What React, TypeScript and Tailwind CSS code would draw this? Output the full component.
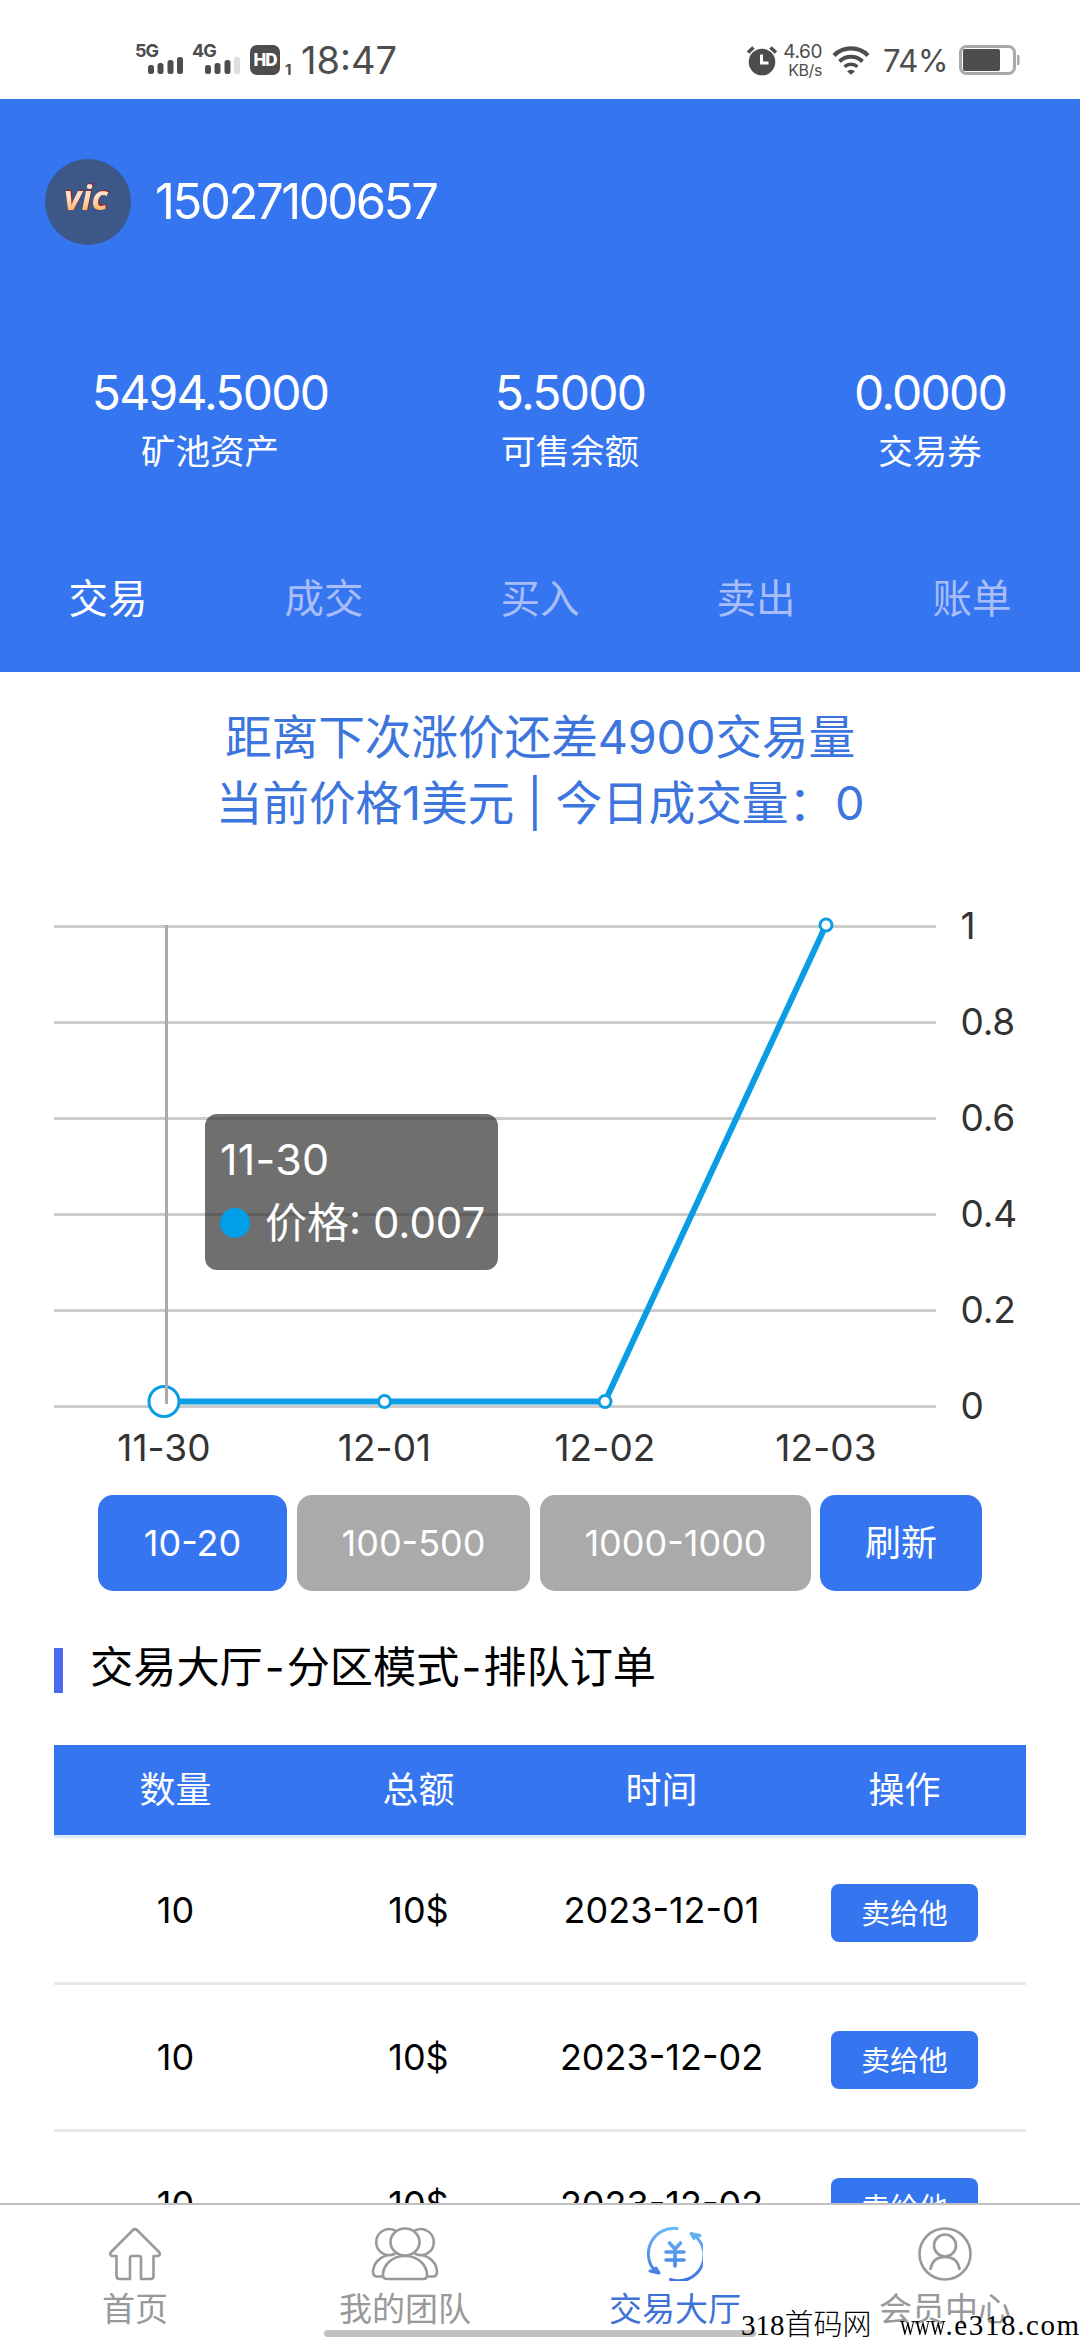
import type { ReactNode } from "react";

const stats = [
  { value: "5494.5000", label: "矿池资产" },
  { value: "5.5000", label: "可售余额" },
  { value: "0.0000", label: "交易券" },
];

const tabs = ["交易", "成交", "买入", "卖出", "账单"];

const orders = [
  { amount: "10", total: "10$", date: "2023-12-01" },
  { amount: "10", total: "10$", date: "2023-12-02" },
  { amount: "10", total: "10$", date: "2023-12-02" },
];

const gridLines = [
  { label: "1", y: 36.5 },
  { label: "0.8", y: 132.5 },
  { label: "0.6", y: 228.5 },
  { label: "0.4", y: 324.5 },
  { label: "0.2", y: 420.5 },
  { label: "0", y: 516.5 },
];

const points = [
  { label: "11-30", x: 164, y: 511.5 },
  { label: "12-01", x: 384.5, y: 511.5 },
  { label: "12-02", x: 605, y: 511.5 },
  { label: "12-03", x: 826, y: 35 },
];

function Signal({ label, weak }: { label: string; weak?: boolean }) {
  return (
    <div className="relative h-8 w-[46px]">
      <span className="absolute left-[-1px] top-0 text-[18px] font-bold leading-[15px] tracking-[-1px]">
        {label}
      </span>
      <svg className="absolute left-3 top-[14px]" width="36" height="18">
        <rect x="0" y="8" width="6" height="9" rx="2.5" fill="#4d4d4d" />
        <rect x="9.5" y="6" width="6" height="11" rx="2.5" fill="#4d4d4d" />
        <rect x="19.5" y="3" width="6" height="14" rx="2.5" fill="#4d4d4d" />
        <rect x="29" y="0" width="6" height="17" rx="2.5" fill={weak ? "#dedede" : "#4d4d4d"} />
      </svg>
    </div>
  );
}

function StatusBar() {
  return (
    <div className="flex h-[99px] items-start pl-[136px] pt-[43px] text-[#4d4d4d]">
      <Signal label="5G" />
      <div className="ml-[11px]">
        <Signal label="4G" weak />
      </div>
      <div className="ml-[11px] mt-[2px] flex size-[30px] items-center justify-center rounded-[7px] bg-[#4d4d4d] text-[17px] font-extrabold leading-none tracking-[-1px] text-white">
        HD
      </div>
      <span className="ml-[5px] mt-[19px] w-[8px] text-[15px] font-bold leading-[15px]">1</span>
      <span className="ml-[8px] w-[99px] text-[38px] leading-[34px]">18:47</span>

      <svg className="ml-[346px] mt-[2px]" width="32" height="32" viewBox="0 0 32 32">
        <circle cx="16" cy="17" r="13.3" fill="#4d4d4d" />
        <path d="M2 7.5 7.5 2.5M24.5 2.5 30 7.5" stroke="#4d4d4d" strokeWidth="3.6" fill="none" />
        <path d="M15.5 9.5v8.5h7" stroke="#fff" strokeWidth="3" fill="none" />
      </svg>
      <div className="ml-[2px] mt-[-1px] w-[42px] text-right">
        <div className="text-[19px] leading-[20px] tracking-[-0.4px]">4.60</div>
        <div className="text-[16px] leading-[16px] tracking-[-0.4px]">KB/s</div>
      </div>
      <svg className="ml-[10px] mt-[3px]" width="38" height="30" viewBox="0 0 38 30">
        <path d="M2 9.5a24 24 0 0 1 34 0" stroke="#4d4d4d" strokeWidth="4.2" fill="none" />
        <path d="M7.5 15.5a16.5 16.5 0 0 1 23 0" stroke="#4d4d4d" strokeWidth="4" fill="none" />
        <path d="M12.5 20.8a9.5 9.5 0 0 1 13 0" stroke="#4d4d4d" strokeWidth="3.6" fill="none" />
        <path d="M15 25.2a6 6 0 0 1 8 0L19 28.8z" fill="#4d4d4d" />
      </svg>
      <span className="ml-[13px] mt-[1px] w-[68px] text-[31px] leading-[34px] tracking-[-0.4px]">74%</span>
      <svg className="ml-[8px] mt-[2px]" width="62" height="30" viewBox="0 0 62 30">
        <rect x="1.5" y="1.5" width="54" height="27" rx="6" fill="#fff" stroke="#a9a9a9" strokeWidth="3" />
        <rect x="4" y="4" width="37" height="22" rx="2" fill="#4d4d4d" />
        <path d="M58 10h1.5q1 0 1 1.5v7q0 1.5-1 1.5H58z" fill="#a9a9a9" />
      </svg>
    </div>
  );
}

function Header() {
  return (
    <div className="h-[573px] overflow-hidden bg-[#3576f0] text-white">
      <div className="flex items-center pl-[45px] pt-[60px]">
        <div className="flex size-[86px] justify-center rounded-full bg-[#3d5886] pt-[18px]">
          <span className="bg-gradient-to-b from-[#ffe0c4] from-30% via-[#ffb060] via-50% to-[#f0702c] to-75% bg-clip-text pr-1 font-['Open_Sans'] text-[34px] font-bold italic leading-[40px] text-transparent drop-shadow-[1px_-1px_0_#a01818]">
            vic
          </span>
        </div>
        <span className="ml-[24px] text-[49px] leading-[62px] tracking-[-2.4px]">15027100657</span>
      </div>

      <div className="-mr-[30px] ml-[30px] mt-[114px] grid grid-cols-3 text-center">
        {stats.map((s) => (
          <div key={s.label}>
            <div className="text-[48px] leading-[68px] tracking-[-1.8px]">{s.value}</div>
            <div className="text-[34.5px] leading-[50px]">{s.label}</div>
          </div>
        ))}
      </div>

      <div className="mt-[92px] grid grid-cols-5 text-center text-[39.5px] leading-[60px]">
        {tabs.map((t, i) => (
          <span key={t} className={i === 0 ? "text-white" : "text-[#a9bdf9]"}>
            {t}
          </span>
        ))}
      </div>
    </div>
  );
}

function PriceChart() {
  return (
    <div className="relative h-[605px]">
      <svg width="1080" height="605" className="block">
        {gridLines.map((g) => (
          <g key={g.label}>
            <rect x="54" y={g.y - 1.5} width="882" height="3" fill="#cccccc" />
            <text x="960.5" y={g.y + 12.5} fontSize="37" letterSpacing="-0.2" fill="#333">
              {g.label}
            </text>
          </g>
        ))}
        <polyline
          points={points.map((p) => `${p.x},${p.y}`).join(" ")}
          fill="none"
          stroke="#0b9de3"
          strokeWidth="6"
          strokeLinejoin="round"
        />
        {points.map((p, i) => (
          <g key={p.label}>
            <circle cx={p.x} cy={p.y} r={i === 0 ? 15 : 6} fill="#fff" stroke="#0b9de3" strokeWidth="3" />
            <text x={p.x} y="571" fontSize="37" letterSpacing="0.1" textAnchor="middle" fill="#333">
              {p.label}
            </text>
          </g>
        ))}
        <rect x="165" y="35" width="3" height="479" fill="#aaaaaa" />
      </svg>

      <div className="absolute left-[205px] top-[224px] h-[156px] w-[293px] rounded-xl bg-[rgba(50,50,50,0.7)] pl-[15px] pt-[14px] text-[42px] leading-[63px] text-white">
        <div className="text-[43px] tracking-[0.3px]">11-30</div>
        <div className="flex items-center whitespace-nowrap">
          <span className="mr-[15px] size-[30px] rounded-full bg-[#009fe8]" />
          <span>价格: 0.007</span>
        </div>
      </div>
    </div>
  );
}

function Ranges() {
  return (
    <div className="flex h-[96px] pl-[98px] text-center text-[36px] leading-[95px] text-white">
      <button className="w-[189px] rounded-[15px] bg-[#3576f0]">10-20</button>
      <button className="ml-[10px] w-[233px] rounded-[15px] bg-[#aaaaaa]">100-500</button>
      <button className="ml-[10px] w-[271px] rounded-[15px] bg-[#aaaaaa]">1000-1000</button>
      <button className="ml-[9px] w-[162px] rounded-[15px] bg-[#3576f0]">刷新</button>
    </div>
  );
}

function Orders() {
  return (
    <div className="mx-[54px] mt-[52px] text-center">
      <div className="grid h-[93px] grid-cols-4 border-b-[3px] border-[#dce8fb] bg-[#3576f0] bg-clip-padding text-[36px] leading-[90px] text-white">
        <span>数量</span>
        <span>总额</span>
        <span>时间</span>
        <span>操作</span>
      </div>
      {orders.map((o, i) => (
        <div
          key={i}
          className="grid h-[147px] grid-cols-4 border-b-[3px] border-[#e8e8e8] text-[36px] leading-[144px] text-black"
        >
          <span>{o.amount}</span>
          <span>{o.total}</span>
          <span>{o.date}</span>
          <button className="mt-[46px] h-[58px] w-[147px] justify-self-center rounded-lg bg-[#3576f0] text-[28.8px] leading-[55px] text-white">
            卖给他
          </button>
        </div>
      ))}
    </div>
  );
}

function NavItem({ label, active, children }: { label: string; active?: boolean; children: ReactNode }) {
  return (
    <div className="flex flex-1 flex-col items-center pt-[20px]">
      {children}
      <span
        className={
          active
            ? "mt-[8px] text-[33px] leading-[40px] text-[#3f72d8]"
            : "mt-[8px] text-[33px] leading-[40px] text-[#999999]"
        }
      >
        {label}
      </span>
    </div>
  );
}

function BottomNav() {
  return (
    <div className="absolute inset-x-0 bottom-0 flex h-[137px] border-t-[2px] border-[#c0c0c0] bg-white">
      <NavItem label="首页">
        <svg width="54" height="56" viewBox="0 0 54 56" fill="none" stroke="#999" strokeWidth="2.6" strokeLinejoin="round">
          <path d="M8.5 31H4q-3-1-1-4L25 5q2-1.800 4 0l22 22q2 3-1 4h-4.500v20q0 3-3 3H33V33q0-2-2-2h-7q-2 0-2 2v21h-10.500q-3 0-3-3z" />
        </svg>
      </NavItem>
      <NavItem label="我的团队">
        <svg width="68" height="56" viewBox="0 0 68 56" fill="none" stroke="#999" strokeWidth="2.6" strokeLinecap="round">
          <ellipse cx="34" cy="17" rx="14.5" ry="13.5" />
          <path d="M34 31c13 0 22 9 22 19q0 4-3.500 4h-37q-3.500 0-3.500-4c0-10 9-19 22-19z" />
          <path d="M24 5.500a13 13 0 1 0-.5 23.500M44 5.500a13 13 0 1 1 .5 23.500" />
          <path d="M17 30Q3 34 2 46.500q0 5 4 5h6M51 30Q65 34 66 46.500q0 5-4 5h-6" />
        </svg>
      </NavItem>
      <NavItem label="交易大厅" active>
        <svg width="56" height="56" viewBox="0 0 56 56" fill="none" stroke="url(#trade)" strokeWidth="3" strokeLinecap="round" strokeLinejoin="round">
          <defs>
            <linearGradient id="trade" gradientUnits="userSpaceOnUse" x1="0" y1="0" x2="0" y2="56">
              <stop offset="0" stopColor="#6cbcf8" />
              <stop offset="1" stopColor="#3f74dc" />
            </linearGradient>
          </defs>
          <path d="M30 3.5A25.5 25.5 0 0 0 9 47M3 46l9 2-3-5" />
          <path d="M23.5 54.5A25.5 25.5 0 0 0 47 10M53 10.500l-9-2 3 5" />
          <path d="M22.5 18l5.5 6 5.5-6M19 27h18M19 35h18M28 25v16" strokeWidth="3.6" />
        </svg>
      </NavItem>
      <NavItem label="会员中心">
        <svg width="56" height="56" viewBox="0 0 56 56" fill="none" stroke="#999" strokeWidth="2.6" strokeLinecap="round">
          <circle cx="28" cy="29" r="25.5" />
          <circle cx="28" cy="20.5" r="11" />
          <path d="M13.5 44q2-12 14.5-12t14.5 12" />
        </svg>
      </NavItem>
    </div>
  );
}

export default function App() {
  return (
    <div className="relative h-[2340px] w-[1080px] overflow-hidden bg-white font-[Inter,'Noto_Sans_CJK_SC',sans-serif]">
      <StatusBar />
      <Header />

      <div className="h-[218px] pt-[32px] text-center text-[46.8px] leading-[66px] text-[#3c75dd]">
        <p className="tracking-[-0.2px]">距离下次涨价还差4900交易量</p>
        <p className="tracking-[-0.2px]">当前价格1美元 | 今日成交量：0</p>
      </div>

      <PriceChart />
      <Ranges />

      <div className="mt-[47px] flex h-[55px] items-center pl-[54px]">
        <div className="mt-[10px] h-[45px] w-[9px] bg-[#4a6bec]" />
        <h2 className="ml-[27px] mt-[2px] text-[43.2px] leading-[60px] text-black">
          交易大厅<span className="mx-[2px]">-</span>分区模式<span className="mx-[2px]">-</span>排队订单
        </h2>
      </div>

      <Orders />
      <BottomNav />

      {/* gesture bar */}
      <div className="absolute left-[324px] top-[2330px] h-[7px] w-[432px] rounded-full bg-[#c0c0c0]" />

      {/* site watermark */}
      <div className="absolute left-[741px] top-[2311px] flex h-[28px] w-[339px] items-center whitespace-nowrap font-['Liberation_Serif','Noto_Sans_CJK_SC',serif] text-[29px] leading-[28px] text-black">
        <span>318</span>
        <span className="font-light">首码网</span>
        <span className="ml-[28px] w-[46px] origin-left scale-x-72">www</span>
        <span className="tracking-[1.6px]">.e318.com</span>
      </div>
    </div>
  );
}
